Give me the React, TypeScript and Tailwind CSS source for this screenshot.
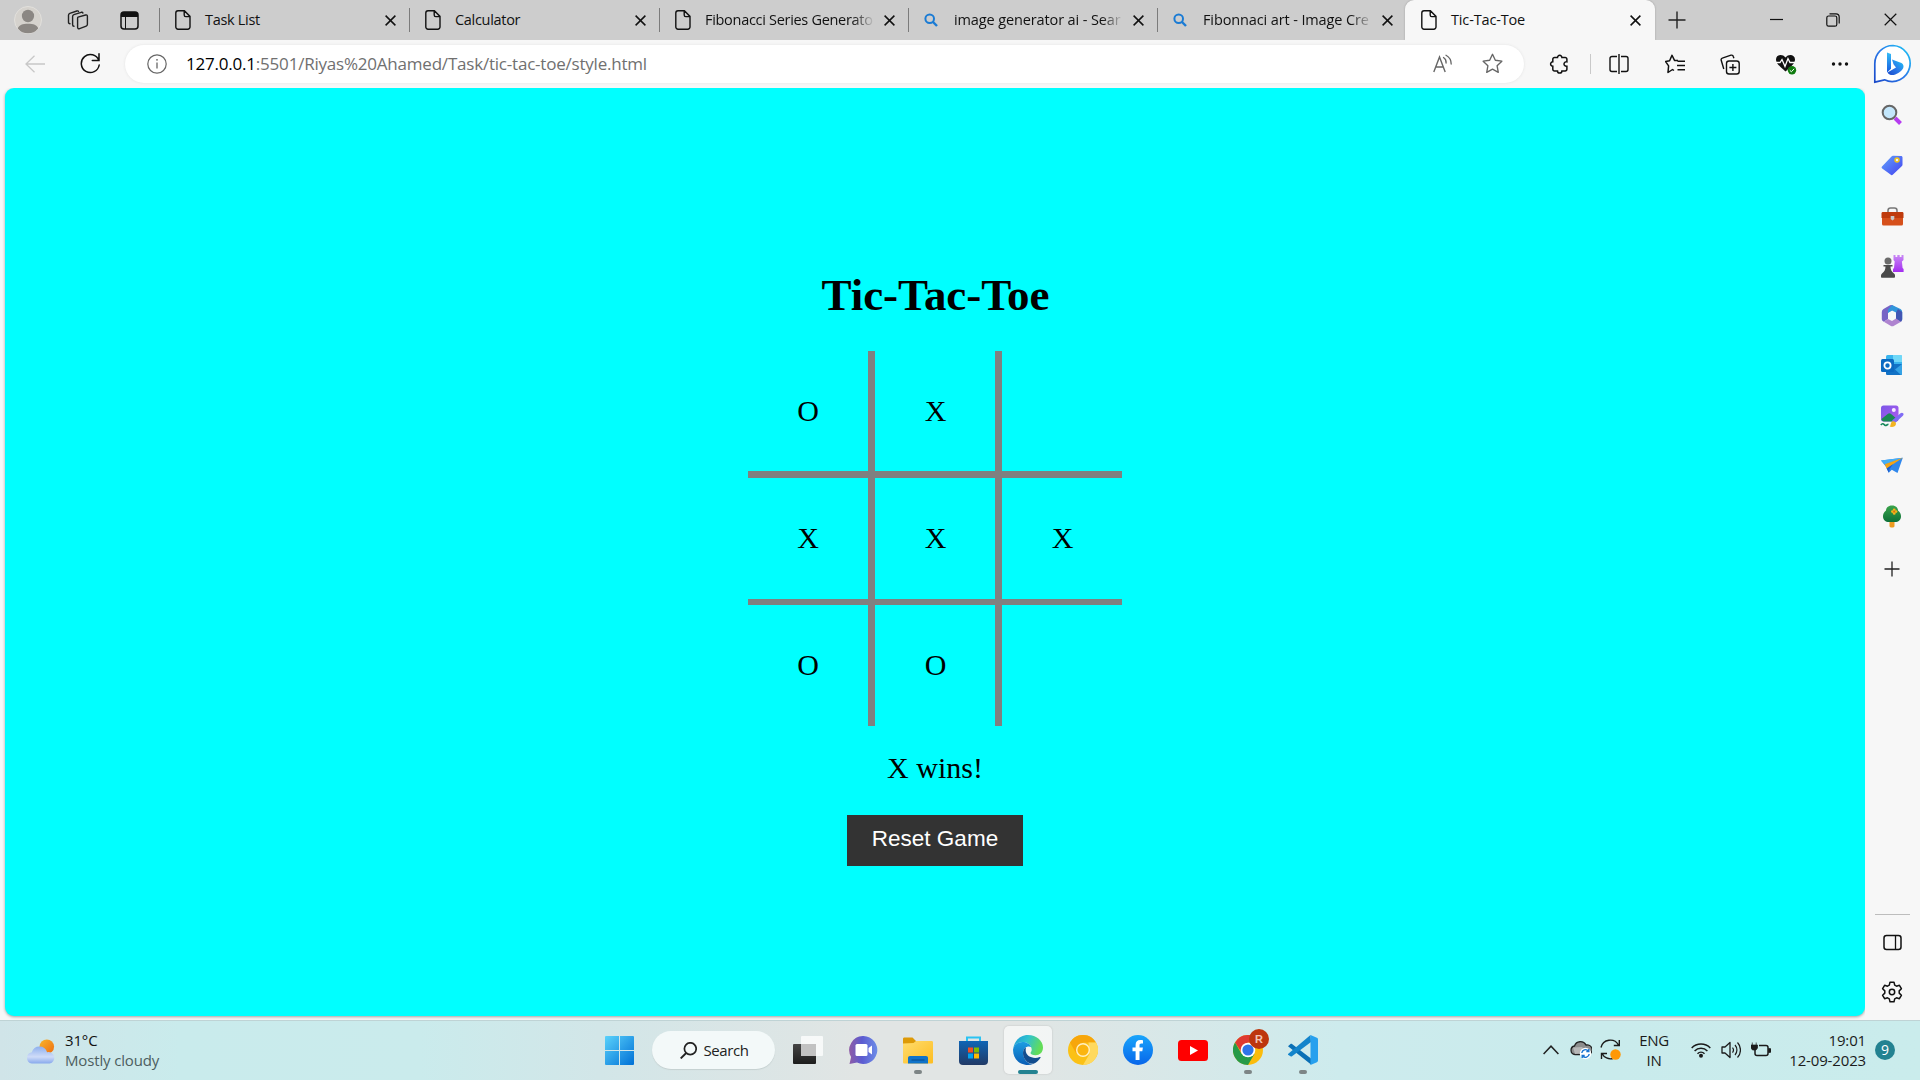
import React from "react";

type Kids = { children?: React.ReactNode };

function Ico({ w = 20, h = w, vb, className = "", children }: Kids & { w?: number; h?: number; vb?: string; className?: string }) {
  return (
    <svg width={w} height={h} viewBox={vb ?? `0 0 ${w} ${h}`} fill="none" className={`block shrink-0 ${className}`}>
      {children}
    </svg>
  );
}

function Cell({ children, className = "" }: Kids & { className?: string }) {
  return <div className={`flex items-center justify-center ${className}`}>{children}</div>;
}

/* ---------- Tab strip ---------- */

const FileIcon = () => (
  <Ico w={16} h={20}>
    <path d="M3 .8h6.4L15 6.4V17a2.2 2.2 0 0 1-2.2 2.2H3A2.2 2.2 0 0 1 .8 17V3A2.2 2.2 0 0 1 3 .8ZM9.2 1v4a1.6 1.6 0 0 0 1.6 1.6H15" stroke="#111" strokeWidth="1.4" />
  </Ico>
);

const BlueSearch = () => (
  <Ico w={14} h={14}>
    <circle cx="5.7" cy="5.7" r="4.3" stroke="#1a7bd4" strokeWidth="2" />
    <path d="m9 9 4 4" stroke="#1a7bd4" strokeWidth="2.4" />
  </Ico>
);

const Cross = ({ s = 11, sw = 1.5 }: { s?: number; sw?: number }) => (
  <Ico w={s} vb="0 0 11 11">
    <path d="m.6.6 9.8 9.8M10.4.6.6 10.4" stroke="#111" strokeWidth={sw} />
  </Ico>
);

function Tab({ title, search, fade, className }: { title: string; search?: boolean; fade?: boolean; className: string }) {
  return (
    <div className={`flex h-10 items-center ${className}`}>
      <div className="h-6 w-px bg-[#7b7b7b]" />
      <div className={`ml-[14px] flex w-[18px] ${search ? "justify-start pl-px" : "justify-center"}`}>{search ? <BlueSearch /> : <FileIcon />}</div>
      <div
        className={`ml-[13px] text-[14.5px] leading-6 whitespace-nowrap text-[#111] ${search ? "tracking-[-0.12px]" : "tracking-[-0.3px]"} ${fade ? "w-[168px] [mask-image:linear-gradient(to_right,black_88%,transparent_101%)]" : "w-[169px]"}`}
      >
        {title}
      </div>
      <div className="ml-[11px] pt-px"><Cross /></div>
    </div>
  );
}

function TabStrip() {
  return (
    <div className="flex h-10 shrink-0 bg-[#cdcdcd]">
      <div className="grid w-[159px] grid-cols-[56px_43px_60px] items-center justify-items-center">
        <Ico w={28}>
          <circle cx="14" cy="14" r="13.5" fill="#d5d2cd" stroke="#e2e0dc" />
          <ellipse cx="14" cy="10" rx="6.1" ry="6.2" fill="#8b8783" />
          <path d="M3.8 22.4C5 18.8 8.5 17.7 14 17.7s9 1.1 10.2 4.7A13.3 13.3 0 0 1 14 27.3 13.3 13.3 0 0 1 3.8 22.4Z" fill="#8b8783" />
        </Ico>
        <Ico w={22} h={20}>
          <g stroke="#222" strokeWidth="1.4" strokeLinecap="round" strokeLinejoin="round">
            <path d="M11 7.2 18.6 5c1-.3 1.8.2 1.8 1.2v8c0 1-.4 1.6-1.2 1.9l-6.6 2.5c-1.1.4-2-.1-2-1.3V8.2c0-.5.1-.8.4-1Z" />
            <path d="M7 16.3c-1 0-1.4-.5-1.4-1.5V6.5c0-1 .4-1.6 1.3-1.9l7.3-2.3c.9-.2 1.5 0 1.7.7" />
            <path d="M3 13.8c-1 0-1.5-.6-1.5-1.5V5.2c0-1 .4-1.6 1.3-1.9L9.8 1c.9-.3 1.5 0 1.7.6" />
          </g>
        </Ico>
        <Ico w={19}>
          <rect x="1" y="1" width="17" height="17" rx="3" stroke="#111" strokeWidth="1.5" />
          <path d="M1 6V4a3 3 0 0 1 3-3h11a3 3 0 0 1 3 3v2Z" fill="#111" />
          <path d="M5.5 6v12" stroke="#111" />
        </Ico>
      </div>
      <Tab className="w-[250px]" title="Task List" />
      <Tab className="w-[250px]" title="Calculator" />
      <Tab className="w-[249px]" title="Fibonacci Series Generato" fade />
      <Tab className="w-[249px]" title="image generator ai - Sear" search fade />
      <Tab className="w-[248px]" title="Fibonnaci art - Image Cre" search fade />
      <div className="flex h-10 w-[250px] items-center rounded-t-[9px] bg-[#f7f7f7] pl-4 shadow-[0_0_2px_#999]">
        <FileIcon />
        <div className="ml-[14px] w-[179px] text-[14.5px] leading-6 tracking-[-0.15px] text-[#111]">Tic-Tac-Toe</div>
        <div className="pt-px"><Cross /></div>
      </div>
      <div className="grid flex-1 grid-cols-[44px_50px_55px_58px_57px] items-center justify-items-center pb-px">
        <Ico w={18}><path d="M9 .5v17M.5 9h17" stroke="#222" strokeWidth="1.4" /></Ico>
        <Cell className="col-start-3"><Ico w={13}><path d="M0 6.500h13" stroke="#111" strokeWidth="1.2" /></Ico></Cell>
        <Ico w={14}>
          <rect x=".8" y="3" width="10" height="10.200" rx="1.8" stroke="#111" strokeWidth="1.2" />
          <path d="M3.5.8H10a3.200 3.200 0 0 1 3.200 3.200v6.500" stroke="#111" strokeWidth="1.2" />
        </Ico>
        <Cross s={13} sw={1} />
      </div>
    </div>
  );
}

/* ---------- Toolbar ---------- */

const STAR = "m10 1.2 2.7 5.7 6.2.9-4.5 4.4 1.1 6.2L10 15.4l-5.5 3 1.1-6.2L1.1 7.8l6.2-.9Z";

function Toolbar() {
  return (
    <div className="relative flex h-12 shrink-0 items-center bg-[#f7f7f7]">
      <div className="grid w-[125px] grid-cols-[70px_40px] items-center justify-items-center pb-px">
        <Ico w={20} h={18}><path d="M20 9H1M9.500.8 1 9l8.500 8.200" stroke="#c8c8c8" strokeWidth="1.3" /></Ico>
        <Ico w={20} h={21}>
          <path d="M18.8 7.500A9 9 0 1 0 19.200 12M19 .8v6.700h-6.700" stroke="#111" strokeWidth="1.5" strokeLinecap="round" />
        </Ico>
      </div>
      <div className="mt-[-1px] flex h-[38px] w-[1399px] items-center rounded-full bg-white pl-[22px] shadow-[0_0_3px_#e2e2e2]">
        <Ico w={20}>
          <circle cx="10" cy="10" r="9.200" stroke="#666" strokeWidth="1.2" />
          <path d="M10 8.500v6" stroke="#666" strokeWidth="1.3" />
          <circle cx="10" cy="5.800" r=".9" fill="#666" />
        </Ico>
        <div className="ml-[19px] text-[17px] leading-7 tracking-[-0.21px] whitespace-nowrap text-[#707070]">
          <span className="text-black">127.0.0.1</span>:5501/Riyas%20Ahamed/Task/tic-tac-toe/style.html
        </div>
        <div className="mr-[21px] ml-auto flex items-center gap-[29px]">
          <Ico w={20}>
            <path d="m.8 18 5.700-15 5.700 15M2.800 13h7.400" stroke="#666" strokeWidth="1.4" />
            <path d="M10.5 3.500a6 6 0 0 1 2.600 5.500M13 1.300a10 10 0 0 1 5.200 8.700" stroke="#666" strokeWidth="1.3" strokeLinecap="round" />
          </Ico>
          <Ico w={21} vb="0 0 20 20"><path d={STAR} stroke="#666" strokeWidth="1.3" strokeLinejoin="round" /></Ico>
        </div>
      </div>
      <div className="ml-2 grid grid-cols-[54px_8px_50px_62px_48px_63px_46px_57px] items-center justify-items-center">
        <Ico w={20}>
          <path d="M5.5 3.500h3a2.200 2.200 0 1 1 4.400 0h3.300a1.700 1.700 0 0 1 1.700 1.700v2.600c-3.400-.7-4.300 4.700 0 4.400v3a1.700 1.700 0 0 1-1.700 1.700h-3.300a2.200 2.200 0 1 1-4.400 0h-3a1.700 1.700 0 0 1-1.700-1.700v-3a2.200 2.200 0 1 1 0-4.400V5.200a1.700 1.700 0 0 1 1.700-1.700Z" stroke="#111" strokeWidth="1.5" />
        </Ico>
        <div className="h-5 w-px bg-[#c9c9c9]" />
        <Ico w={20}><path d="M10 0v20M8 2.500H3A2 2 0 0 0 1 4.500v11a2 2 0 0 0 2 2h5M12 2.500h5a2 2 0 0 1 2 2v11a2 2 0 0 1-2 2h-5" stroke="#111" strokeWidth="1.4" /></Ico>
        <Ico w={20}>
          <path d="m12 6.600-2.500-.2L7 1.200 4.600 6.800l-4 .8 3 4.300L3 18.500l4.500-3 1.500 1M13 6.600h-1M12.500 7.200H20M12 11.500h8M12.500 15.700H20" stroke="#111" strokeWidth="1.5" strokeLinejoin="round" />
        </Ico>
        <Ico w={20} h={21}>
          <rect x="6.500" y="7" width="12.700" height="13" rx="2.500" stroke="#111" strokeWidth="1.4" />
          <path d="M12.900 10v7M9.400 13.500h7M3.800 15 1.200 6.300c-.3-1 .1-1.900 1.100-2.200L11 1.200c1-.3 1.900.1 2.200 1.100l.7 2" stroke="#111" strokeWidth="1.4" />
        </Ico>
        <Ico w={22} h={22}>
          <path d="M10.500 18.500C4 13 1 10 1 6.500 1 1.500 7.500.5 10.500 4.500 13.500.5 20 1.500 20 6.500c0 3.500-3 6.500-9.500 12Z" fill="#111" />
          <path d="M1 9.500h4l2-3 3 7 3-8 2 4h5" stroke="#fff" strokeWidth="1.3" />
          <circle cx="17" cy="17.300" r="4.200" fill="#107c10" />
          <path d="m14.800 17.300 1.600 1.500 2.700-3" stroke="#fff" />
        </Ico>
        <Ico w={18} h={6}><circle cx="2.500" cy="3" r="1.700" fill="#111" /><circle cx="9" cy="3" r="1.700" fill="#111" /><circle cx="15.500" cy="3" r="1.700" fill="#111" /></Ico>
        <div className="mb-px pl-[3px]">
          <Ico w={40}>
            <defs>
              <linearGradient id="bo" x1="1" y1="0" x2="0" y2="1"><stop stopColor="#1cc8f5" /><stop offset=".5" stopColor="#2b7bea" /><stop offset="1" stopColor="#1a49c9" /></linearGradient>
              <linearGradient id="bb" x1="0" y1="0" x2="0" y2="1"><stop stopColor="#35bdf6" /><stop offset="1" stopColor="#175be0" /></linearGradient>
            </defs>
            <path d="M20 1.500a18 18 0 1 1-8.500 34.300L1.800 38.200V20A18.200 18.200 0 0 1 20 1.500Z" fill="#fff" stroke="url(#bo)" strokeWidth="1.7" />
            <path d="m14 8.500 4 1.600v14.700l-4 3.700Z" fill="url(#bb)" />
            <path d="M19 15.500 28.500 19a4 4 0 0 1 1.500 5.500C27 29.500 18 34 14.500 28.500l8.500-5-2.500-3.200Z" fill="url(#bo)" />
          </Ico>
        </div>
      </div>
    </div>
  );
}

/* ---------- Side bar ---------- */

function SideBar() {
  return (
    <div className="flex w-[55px] flex-col items-center bg-[#f7f7f7] pt-[2px] pr-px">
      <Cell className="h-[50px]">
        <Ico w={22}>
          <path d="m14 14 5.500 5.500" stroke="#b63cf0" strokeWidth="4" />
          <circle cx="8.500" cy="8.500" r="6.800" fill="#c3e6fb" stroke="#666" strokeWidth="2" />
        </Ico>
      </Cell>
      <Cell className="h-[50px]">
        <Ico w={22}>
          <defs><linearGradient id="tg" x1="0" y1="0" x2="1" y2="1"><stop stopColor="#62a4fb" /><stop offset="1" stopColor="#4340f0" /></linearGradient></defs>
          <path d="m1 12.500 9.500-10c.6-.6 1-.8 2-.8l7.500.3c1 0 1.500.6 1.500 1.500v6.800c0 1-.2 1.400-.8 2L12 20.600c-.9.8-1.700.8-2.500 0l-8.300-6c-.7-.7-.8-1.400-.2-2.100Z" fill="url(#tg)" />
          <circle cx="16" cy="6" r="2" fill="#e8f0ff" stroke="#f2c318" strokeWidth="1.5" />
        </Ico>
      </Cell>
      <Cell className="h-[50px] pt-[2px]">
        <Ico w={23} h={19}>
          <path d="M7 6V3.500C7 2 8 1 9.500 1h4C15 1 16 2 16 3.500V6" stroke="#777" strokeWidth="1.5" />
          <rect x="1" y="9" width="21" height="9.500" rx="1.5" fill="#d6501b" />
          <path d="M.5 6.500C.5 5.500 1 5 2 5h19c1 0 1.500.5 1.500 1.500V11h-22Z" fill="#bf3b0d" />
          <path d="M9.700 9h3.600v3l-1.800 1.500L9.700 12Z" fill="#c8c8c8" />
        </Ico>
      </Cell>
      <Cell className="h-[50px] pt-px">
        <Ico w={24} h={24}>
          <defs><linearGradient id="rk" x1="0" y1="0" x2="0" y2="1"><stop stopColor="#c98af5" /><stop offset="1" stopColor="#a32cf0" /></linearGradient></defs>
          <path d="M13.500 1h2v2h1.800V1h2.400v2h1.800V1h2v5l-1.600 1.500.7 6.500 1 1v3H13v-3l1-1 .7-6.500L13.500 6Z" fill="url(#rk)" />
          <circle cx="8" cy="7" r="3.500" fill="#6b6b6b" />
          <path d="M3.500 11h9v1.500h-2c0 3 1 5 3.500 7 .8.6 1 1.300 1 2v1.500c0 .5-.5.8-1 .8H2c-.5 0-1-.3-1-.8v-1.500c0-.7.3-1.400 1-2 2.500-2 3.500-4 3.500-7h-2Z" fill="#4a4a4a" />
        </Ico>
      </Cell>
      <Cell className="h-[50px]">
        <Ico w={22} h={23}>
          <path d="M9 1.200 2.500 5A3.500 3.500 0 0 0 .8 8v7c0 1.500 1 2.300 2 2.800L7 15V8.500L15.500 4 11.500 1.300a2.500 2.500 0 0 0-2.500-.1Z" fill="#7663c5" />
          <path d="M11 1 19.500 5A3.500 3.500 0 0 1 21.200 8v7.500L15 12V8.500L11 6.500 7 9V5.500Z" fill="#3195db" />
          <path d="M21.200 8v7.500a3 3 0 0 1-1.600 2.600L15 15.500V8.500L17 5Z" fill="#4255b3" />
          <path d="M2.800 17.800 7 15l4 2 4-2.500 5 3.300-7 4a3.500 3.500 0 0 1-3.500 0Z" fill="#af84d0" />
          <path d="m9 8 4 .200 2 3.300-2 3.400H9l-2-3.400Z" fill="#f7f7f7" />
        </Ico>
      </Cell>
      <Cell className="h-[50px]">
        <Ico w={22}>
          <rect x="5" y="1" width="16" height="12" rx="1.5" fill="#39b4ee" />
          <path d="M12 1h7.500c1 0 1.500.5 1.500 1.500V8h-9Z" fill="#70d8f8" />
          <path d="M5 10h9l7 0v9.500c0 1-.5 1.500-1.500 1.500h-13C5.500 21 5 20.500 5 19.500Z" fill="#1272c6" />
          <path d="m21 10-7 5.500 6 5.500c.7 0 1-.5 1-1.500Z" fill="#35a3e6" />
          <rect x="0" y="5" width="13" height="13" rx="1.5" fill="#0b6ac2" />
          <circle cx="6.500" cy="11.500" r="3.100" stroke="#fff" strokeWidth="1.8" />
        </Ico>
      </Cell>
      <Cell className="h-[50px] pt-[2px]">
        <Ico w={24} h={23}>
          <defs><linearGradient id="pc" x1="0" y1="0" x2="1" y2="1"><stop stopColor="#7b57e8" /><stop offset="1" stopColor="#ae5bed" /></linearGradient></defs>
          <rect x="1" y=".5" width="17.500" height="16" rx="2.500" fill="url(#pc)" />
          <circle cx="13.800" cy="5" r="2" fill="#f7eaff" />
          <path d="M1.500 14 8 8.800c1-.8 1.700-.8 2.700 0l7.300 6c-.5 1.300-1.200 1.700-2.500 1.700H4c-1.500 0-2.500-1-2.500-2.500Z" fill="#1b8a53" />
          <path d="m12 15.500 8.500-7.300c1-.8 2-.7 2.600 0 .7.8.6 1.600-.2 2.500L15 18Z" fill="#806cf5" />
          <path d="M9.500 21.500c1.500-.7.8-3.500 2.700-5 1.500-1 4 .5 3.800 2.500-.3 2.500-3.500 3.500-6.500 2.500Z" fill="#f3b421" />
          <path d="M.8 20c2-2.500 3-.5 4.200.3 1.100.7 2-.8 3.500-1" stroke="#16875a" strokeWidth="1.6" />
        </Ico>
      </Cell>
      <Cell className="h-[50px]">
        <Ico w={22} h={17}>
          <path d="M0 3.500 21.800.8 16.500 16 10.800 12.700 7.800 15.800 5 9.800Z" fill="#2f87ec" />
          <path d="M0 3.500 21.800.8 4 7.600Z" fill="#45aef6" />
          <path d="M21.800.8 3.800 7.200 5.600 11.500Z" fill="#f5a414" />
          <path d="M5.600 11.500 12 7.200 8.600 12 7.800 15.800Z" fill="#1e5ecb" />
        </Ico>
      </Cell>
      <Cell className="h-[50px] pt-[2px]">
        <Ico w={20} h={23}>
          <defs><linearGradient id="tr" x1="0" y1="0" x2="0" y2="1"><stop stopColor="#3aa44b" /><stop offset="1" stopColor="#0d7038" /></linearGradient></defs>
          <path d="M7.500 15h5v6c0 2-5 2-5 0Z" fill="#ee9b20" />
          <path d="M10 .5C5.500.5 4 3.500 4 5.500 1.500 7.500 1 9.500 1 11.500 1 15 3.500 17 7 17h6c3.500 0 6-2 6-5.500 0-2-.5-4-3-6C16 3.500 14.500.5 10 .5Z" fill="url(#tr)" />
          <g fill="#f5b51a"><circle cx="12.200" cy="4.800" r="1.4" /><circle cx="12.200" cy="8.400" r="1.4" /><circle cx="10.400" cy="6.600" r="1.4" /><circle cx="14" cy="6.600" r="1.4" /></g>
          <circle cx="12.200" cy="6.600" r="1" fill="#dd6a12" />
        </Ico>
      </Cell>
      <Cell className="mt-1 h-[50px]"><Ico w={16}><path d="M8 .5v15M.5 8h15" stroke="#222" strokeWidth="1.3" /></Ico></Cell>
      <div className="mt-auto h-px w-[35px] bg-[#bdbdbd]" />
      <Cell className="h-[54px]">
        <Ico w={19} h={17}>
          <rect x="1" y="1.500" width="17" height="14" rx="2.500" stroke="#111" strokeWidth="1.5" />
          <path d="M12.500 1.500v14" stroke="#111" strokeWidth="1.3" />
        </Ico>
      </Cell>
      <Cell className="mb-[5px] h-[46px]">
        <Ico w={22} h={22}>
          <path d="M9 1.200h4l.7 3 1.800 1 2.900-.9 2 3.400-2.200 2.200v2.200l2.200 2.200-2 3.400-2.900-.9-1.800 1-.7 3H9l-.7-3-1.800-1-2.900.9-2-3.400 2.200-2.200V9.900L1.600 7.700l2-3.400 2.900.9 1.800-1Z" stroke="#111" strokeWidth="1.5" strokeLinejoin="round" />
          <circle cx="11" cy="11" r="2.700" stroke="#111" strokeWidth="1.5" />
        </Ico>
      </Cell>
    </div>
  );
}

/* ---------- Game page ---------- */

const BOARD = ["O", "X", "", "X", "X", "X", "O", "O", ""];

function Game() {
  return (
    <div className="flex w-[1860px] flex-col items-center rounded-[9px] bg-[#00ffff] font-['Liberation_Serif',serif] text-black shadow-[0_1px_3px_rgba(0,0,0,0.35)]">
      <h1 className="mt-[180px] h-[54px] pl-px text-[45px] leading-[54px] font-bold tracking-[-0.05px]">Tic-Tac-Toe</h1>
      <div className="mt-[29px] grid h-[375px] grid-cols-[120px_121px_119px] grid-rows-[120px_120px_120px] content-start gap-x-[7px] gap-y-[7px] bg-[linear-gradient(#808080,#808080),linear-gradient(#808080,#808080),linear-gradient(#808080,#808080),linear-gradient(#808080,#808080)] bg-[length:7px_100%,7px_100%,100%_7px,100%_6px] bg-[position:120px_0,247px_0,0_120px,0_248px] bg-no-repeat text-[30px] leading-[34px]">
        {BOARD.map((mark, i) => (
          <Cell key={i}>{mark}</Cell>
        ))}
      </div>
      <p className="mt-[25px] text-[30px] leading-[34px]">X wins!</p>
      <button className="mt-[30px] h-[51px] w-[176px] bg-[#333] pb-[3px] font-['Liberation_Sans',sans-serif] text-[22.5px] text-white">Reset Game</button>
    </div>
  );
}

/* ---------- Task bar ---------- */

function AppSlot({ children, mark, active, className = "" }: Kids & { mark?: boolean; active?: boolean; className?: string }) {
  return (
    <div className={`mx-[3.5px] flex h-12 w-12 flex-col items-center rounded-[5px] ${active ? "bg-white/60 shadow-[0_0_2px_#bbb]" : ""} ${className}`}>
      <div className="flex h-[44px] items-center justify-center pt-[4px]">{children}</div>
      {active && <div className="h-1 w-5 rounded-full bg-[#238291]" />}
      {mark && <div className="h-1 w-2 rounded-full bg-[#7d8586]" />}
    </div>
  );
}

function Apps() {
  return (
    <div className="flex items-center pb-px">
      <AppSlot>
        <Ico w={29}>
          <defs><linearGradient id="wn" x1="0" y1="0" x2="29" y2="29" gradientUnits="userSpaceOnUse"><stop stopColor="#5ad2fb" /><stop offset="1" stopColor="#0070d6" /></linearGradient></defs>
          <path d="M0 1a1 1 0 0 1 1-1h13v14H0ZM15 0h13a1 1 0 0 1 1 1v13H15ZM0 15h14v14H1a1 1 0 0 1-1-1ZM15 15h14v13a1 1 0 0 1-1 1H15Z" fill="url(#wn)" />
        </Ico>
      </AppSlot>
      <div className="mr-[6px] ml-[5px] flex h-[38px] w-[123px] items-center rounded-full bg-[#f3f9f9] pl-[28px] shadow-[0_1px_1px_#c5d0d0]">
        <Ico w={17}><circle cx="10.300" cy="6.700" r="5.900" stroke="#222" strokeWidth="1.7" /><path d="m6.200 11-5.500 5.400" stroke="#222" strokeWidth="1.9" /></Ico>
        <span className="ml-[7px] text-[15px] leading-6 tracking-[-0.4px] text-[#222]">Search</span>
      </div>
      <AppSlot>
        <Ico w={30} h={28}>
          <defs><linearGradient id="tv" x1="0" y1="0" x2="0" y2="1"><stop stopColor="#454545" /><stop offset="1" stopColor="#1d1d1d" /></linearGradient></defs>
          <rect x="0" y="8" width="23" height="20" rx="1" fill="url(#tv)" />
          <rect x="8" y="0" width="22" height="20" rx="1" fill="#fff" fillOpacity=".75" />
          <rect x="8" y="8" width="15" height="12" fill="#c2c2c2" />
        </Ico>
      </AppSlot>
      <AppSlot>
        <Ico w={29} h={28}>
          <defs><linearGradient id="ch" x1="0" y1="0" x2="1" y2="0"><stop stopColor="#8f5ca6" /><stop offset=".45" stopColor="#5b5bd0" /><stop offset="1" stopColor="#6d8de8" /></linearGradient></defs>
          <path d="M14.500 0a14 14 0 1 1-6.500 26.500L.5 28l1.600-7A14 14 0 0 1 14.500 0Z" fill="url(#ch)" />
          <rect x="6.500" y="8" width="12" height="12" rx="1.5" fill="#fff" />
          <path d="m19.500 12 3.500-2.500v9L19.500 16Z" fill="#fff" />
        </Ico>
      </AppSlot>
      <AppSlot mark>
        <Ico w={30} h={27}>
          <defs><linearGradient id="fo" x1="0" y1="0" x2="1" y2="1"><stop stopColor="#ffdc6e" /><stop offset="1" stopColor="#fdbd20" /></linearGradient></defs>
          <path d="M0 2c0-1 .5-1.500 1.500-1.500h8L13 4h14v6H0Z" fill="#dd9a08" />
          <path d="M0 6.500 10.500 6 13 4h15.500c1 0 1.500.5 1.500 1.500V25c0 1-.5 1.500-1.500 1.500h-27C.5 26.500 0 26 0 25Z" fill="url(#fo)" />
          <path d="M5 26.500V21c0-1.200.8-2 2-2h16c1.200 0 2 .8 2 2v5.500Z" fill="#0f73c9" />
          <path d="M8.500 23h13" stroke="#064b8c" />
        </Ico>
      </AppSlot>
      <AppSlot>
        <Ico w={29} h={29}>
          <defs><linearGradient id="st" x1="0" y1="0" x2="0" y2="1"><stop stopColor="#0f65b5" /><stop offset="1" stopColor="#213a66" /></linearGradient></defs>
          <path d="M8 7V1.500h13V7" stroke="#2bc3f2" strokeWidth="2" />
          <path d="M0 5h29v20a4 4 0 0 1-4 4H4a4 4 0 0 1-4-4Z" fill="url(#st)" />
          <path d="M9 11.500h5v5H9Z" fill="#f25022" /><path d="M15 11.500h5v5h-5Z" fill="#7fba00" /><path d="M9 17.500h5v5H9Z" fill="#00a4ef" /><path d="M15 17.500h5v5h-5Z" fill="#ffb900" />
        </Ico>
      </AppSlot>
      <AppSlot active>
        <Ico w={30}>
          <defs>
            <linearGradient id="e1" x1="0" y1="0" x2="1" y2=".3"><stop stopColor="#1d98d8" /><stop offset=".5" stopColor="#2fc2cf" /><stop offset="1" stopColor="#63dd58" /></linearGradient>
            <linearGradient id="e2" x1="0" y1="0" x2="0" y2="1"><stop stopColor="#1b9de2" /><stop offset="1" stopColor="#0b5eb5" /></linearGradient>
          </defs>
          <path d="M.2 14C1 6 7 0 15 0c8.500 0 15 6 15 12.500 0 5-3.500 7.700-7.300 7.700-3.500 0-5.200-1.200-5.200-2.200 0-.8 1.200-1.200 1.200-3.500C18.700 10.500 14.500 7 9.500 7 4.500 7 1.500 10 .2 14Z" fill="url(#e1)" />
          <path d="M.1 14C1.500 9.500 5 7 9.500 7c4 0 7.500 2 8.700 5-3-1.500-8 0-8 6 0 6 4 11 9.800 11-1.500.7-3.300 1-5 1C6 30-.5 23 .1 14Z" fill="url(#e2)" />
          <path d="M13 12.300c-2 1.200-3 3.500-3 5.700 0 6 4.500 11 10.500 10.800 3-1.300 5.500-3.500 7-6.100.4-.7-.2-1-.8-.7-6 2.500-14-.5-14-6.500 0-1.200.1-2.300.3-3.200Z" fill="#124d8f" />
        </Ico>
      </AppSlot>
      <AppSlot>
        <Ico w={30}>
          <circle cx="15" cy="15" r="15" fill="#fbc116" />
          <path d="M2 7.500A15 15 0 0 1 28 7.500H15L8.500 19Z" fill="#f7a60a" />
          <path d="M28 7.500A15 15 0 0 1 15 30l6.500-11-1-11.500Z" fill="#ffd95e" />
          <circle cx="15" cy="15" r="7" fill="#fff0c4" /><circle cx="15" cy="15" r="5.600" fill="#fbb510" />
        </Ico>
      </AppSlot>
      <AppSlot>
        <Ico w={30}>
          <defs><linearGradient id="fb" x1="0" y1="0" x2="0" y2="1"><stop stopColor="#19a5fb" /><stop offset="1" stopColor="#0866ea" /></linearGradient></defs>
          <circle cx="15" cy="15" r="15" fill="url(#fb)" />
          <path d="M12.600 25v-8.800H9.500v-3.800h3.100V10c0-3.500 1.800-5 4.600-5 1.200 0 2.300.2 2.800.3v3.200h-1.700c-1.300 0-1.800.7-1.800 1.800v2.100h3.400l-.6 3.800h-2.800V25Z" fill="#fff" />
        </Ico>
      </AppSlot>
      <AppSlot>
        <Ico w={30} h={21}><rect width="30" height="21" rx="3.500" fill="#f00" /><path d="m12 6 8 4.500-8 4.500Z" fill="#fff" /></Ico>
      </AppSlot>
      <AppSlot mark>
        <div className="relative">
          <Ico w={30}>
            <circle cx="15" cy="15" r="15" fill="#fbbc0c" />
            <path d="M2 7.500A15 15 0 0 1 28 7.500H15L9 18Z" fill="#df3a31" />
            <path d="M2 7.500A15 15 0 0 0 15 30l6.500-11.200-13 0Z" fill="#269a48" />
            <circle cx="15" cy="15" r="7.300" fill="#fff" /><circle cx="15" cy="15" r="5.600" fill="#2f74e8" />
          </Ico>
          <div className="absolute -top-[6px] left-[16px] flex h-5 w-5 items-center justify-center rounded-full bg-[#bd360d] font-['Liberation_Sans',sans-serif] text-[11px] font-bold text-[#f1c4b5]">R</div>
        </div>
      </AppSlot>
      <AppSlot mark>
        <Ico w={30}>
          <path d="M0 11.300 2.500 9c.5-.4 1-.4 1.500 0L23 23.500V29.500Z" fill="#0a6fb5" />
          <path d="M0 19 22.500 0 23 7 4 21.200c-.5.4-1 .4-1.500 0L0 19.800c-.3-.3-.3-.6 0-.8Z" fill="#1384cb" />
          <path d="m22.500 0 6.400 2.800c.7.3 1.100.8 1.100 1.600v21.200c0 .8-.4 1.300-1.100 1.600L22.500 30Z" fill="#27a0ee" />
        </Ico>
      </AppSlot>
    </div>
  );
}

function Tray() {
  return (
    <div className="ml-auto flex items-center pb-[2px] text-[15px] leading-5 text-[#1b1b1b]">
      <Ico w={16} h={10}><path d="m.6 9 7.400-7.800L15.400 9" stroke="#222" strokeWidth="1.5" /></Ico>
      <Ico w={22} h={20} className="ml-[11px]">
        <path d="M5 14.500a4.300 4.300 0 0 1-.5-8.500A6.300 6.300 0 0 1 16 5a5 5 0 0 1 3 9.500Z" fill="#8d8d8d" stroke="#222" strokeWidth="1.3" />
        <path d="M3 7.500 12 7l5 6-12 1Z" fill="#b7b7b7" />
        <circle cx="15.500" cy="13.500" r="5.700" fill="#fff" />
        <path d="M11.800 13a3.700 3.700 0 0 1 6.500-2M19.200 14a3.700 3.700 0 0 1-6.500 2M18.800 9v2.500h-2.500M12.200 18v-2.500h2.500" stroke="#1774d1" strokeWidth="1.4" />
      </Ico>
      <Ico w={21} h={21} className="ml-2">
        <path d="M1 8.500a9.500 9.500 0 0 1 17.500-2.500M19.300 1v5.500h-5.500M13 19.500A9.500 9.500 0 0 1 2 14.500M1.500 20v-5.500H7" stroke="#1b1b1b" strokeWidth="1.4" />
        <circle cx="15.500" cy="15.500" r="5.200" fill="#ff9806" />
      </Ico>
      <div className="ml-[17px] w-8 text-center tracking-[-0.3px]">ENG<br />IN</div>
      <Ico w={20} h={16} className="ml-[21px]">
        <path d="M.7 6a13 13 0 0 1 18.600 0M3.600 9a9 9 0 0 1 12.800 0M6.500 11.700a5 5 0 0 1 7 0" stroke="#1b1b1b" strokeWidth="1.5" />
        <circle cx="10" cy="13.700" r="2" fill="#1b1b1b" />
      </Ico>
      <Ico w={20} h={18} className="ml-[10px]">
        <path d="M1 6h3l5-4.500v15L4 12H1Z" stroke="#1b1b1b" strokeWidth="1.3" strokeLinejoin="round" />
        <path d="M11.500 6.500a4 4 0 0 1 0 5M14 4a7.500 7.500 0 0 1 0 10M16.500 1.500a11 11 0 0 1 0 15" stroke="#1b1b1b" strokeWidth="1.2" />
      </Ico>
      <Ico w={20} h={16} className="ml-[10px]">
        <path d="M8 3.500h7a2 2 0 0 1 2 2v6a2 2 0 0 1-2 2H6a2 2 0 0 1-2-2V8" stroke="#1b1b1b" strokeWidth="1.5" />
        <path d="M0 3h6.500v3L5 8H1.500L0 6ZM1.300.5v3M5.200.5v3M17.500 6.500H19a1 1 0 0 1 1 1v2a1 1 0 0 1-1 1h-1.500Z" fill="#1b1b1b" stroke="#1b1b1b" strokeWidth=".7" />
      </Ico>
      <div className="ml-[12px] w-[83px] text-right tracking-[-0.15px] whitespace-nowrap">19:01<br />12-09-2023</div>
      <div className="mr-[25px] ml-[9px] flex h-5 w-5 items-center justify-center rounded-full bg-[#238291] text-[14px] text-white">9</div>
    </div>
  );
}

function TaskBar() {
  return (
    <div className="grid h-[60px] shrink-0 grid-cols-[591.5px_741px_587.5px] items-center border-t border-[#bfd3d5] bg-[linear-gradient(to_right,#d0e4e8_0px,#c9ebec_180px,#caebec_420px,#d2e6e8_600px,#e1e5e4_860px,#e1e5e4_1020px,#cdebed_1340px,#c9ebec_1600px,#caecec_1920px)]">
      <div className="flex items-center pb-[2px] pl-[26px]">
        <Ico w={30} h={26} vb="0 0 31 26" className="mt-1">
          <defs>
            <linearGradient id="sn" x1="0" y1="0" x2="1" y2="1"><stop stopColor="#f9b52a" /><stop offset="1" stopColor="#ee6d12" /></linearGradient>
            <linearGradient id="cl" x1="0" y1="0" x2="0" y2="1"><stop stopColor="#8eb0ee" /><stop offset=".6" stopColor="#cfdcf8" /><stop offset="1" stopColor="#86a8ec" /></linearGradient>
          </defs>
          <circle cx="21.500" cy="7.500" r="7.500" fill="url(#sn)" />
          <path d="M6 25a6 6 0 0 1 0-11.800 8.300 8.300 0 0 1 15.800 0A6 6 0 1 1 24.500 25Z" fill="url(#cl)" />
        </Ico>
        <div className="ml-[9px] text-[15px] leading-5 tracking-[-0.15px] whitespace-nowrap text-[#111]">
          31°C<br /><span className="text-[#4d5e60]">Mostly cloudy</span>
        </div>
      </div>
      <Apps />
      <Tray />
    </div>
  );
}

export default function App() {
  return (
    <div className="flex h-[1080px] w-[1920px] flex-col overflow-hidden bg-[#f7f7f7] font-['Open_Sans','Noto_Sans',sans-serif]">
      <TabStrip />
      <Toolbar />
      <div className="flex min-h-0 flex-1 pl-[5px]">
        <div className="flex pb-[4px]"><Game /></div>
        <SideBar />
      </div>
      <TaskBar />
    </div>
  );
}
